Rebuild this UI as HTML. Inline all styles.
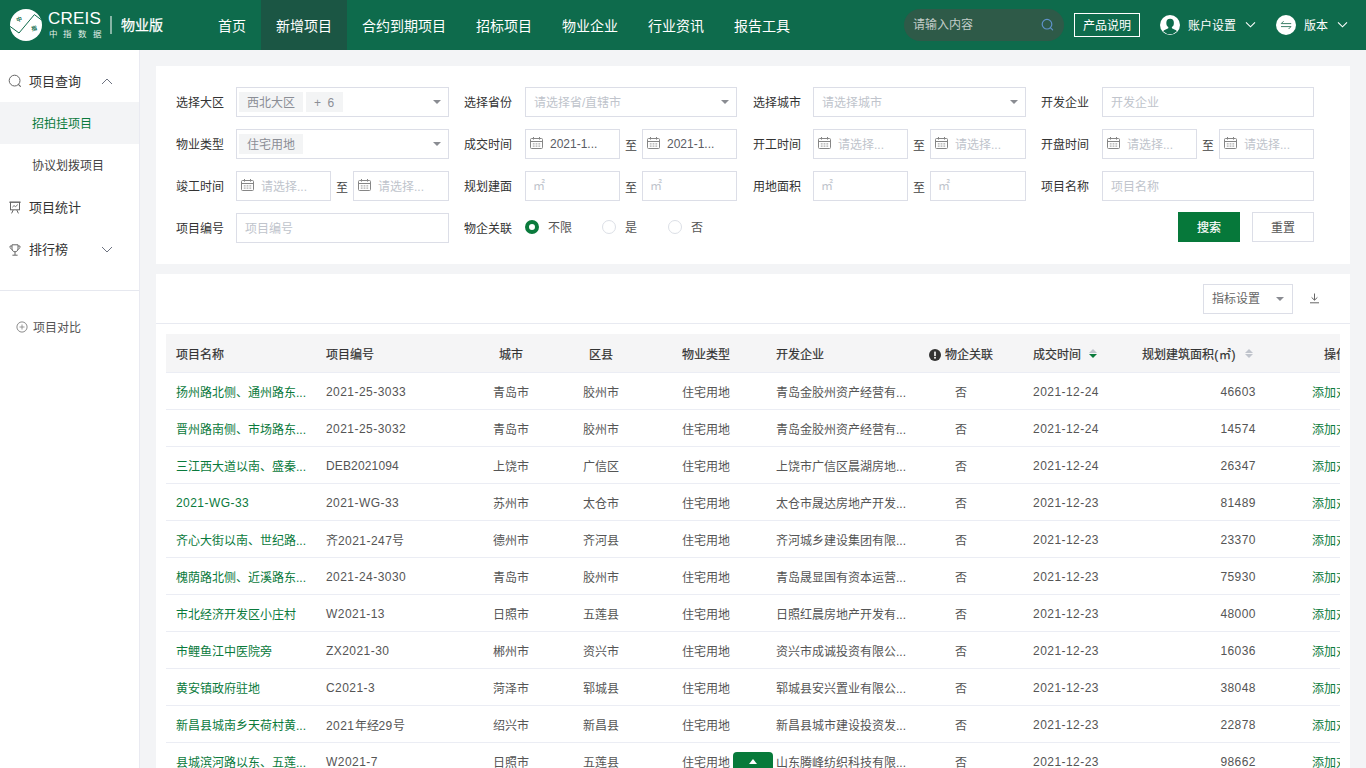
<!DOCTYPE html>
<html lang="zh-CN">
<head>
<meta charset="utf-8">
<title>CREIS 中指数据 物业版</title>
<style>
*{box-sizing:border-box;margin:0;padding:0}
html,body{width:1366px;height:768px;overflow:hidden}
body{position:relative;background:#f3f4f6;font-family:"Liberation Sans",sans-serif;font-size:12px;color:#333;-webkit-font-smoothing:antialiased}
.abs{position:absolute}
/* header */
#hdr{position:absolute;left:0;top:0;width:1366px;height:50px;background:#0e6b4c;color:#fff}
#hdr .logo-c{position:absolute;left:10px;top:9px;width:32px;height:32px}
#hdr .brand{position:absolute;left:48px;top:9px;font-size:17px;line-height:20px;letter-spacing:.2px;color:#fff}
#hdr .brand2{position:absolute;left:48.5px;top:28.5px;font-size:8.5px;line-height:11px;letter-spacing:5.9px;color:#e3efe9;white-space:nowrap}
#hdr .vbar{position:absolute;left:110px;top:16px;width:2px;height:18px;background:#86b5a5}
#hdr .edition{position:absolute;left:121px;top:15px;font-size:14px;line-height:20px;color:#fff;font-weight:500;-webkit-text-stroke:.25px #fff}
#nav{position:absolute;left:203px;top:0;height:50px;display:flex}
#nav div{height:50px;line-height:53px;padding:0 15px;font-size:14px;color:#fff;white-space:nowrap;width:auto}
#nav div.on{background:#1b5644}
#srch{position:absolute;left:904px;top:9px;width:160px;height:32px;border-radius:16px;background:#2e5a48}
#srch span{position:absolute;left:9px;top:0;line-height:32px;font-size:12px;color:#c3cdc8}
#srch svg{position:absolute;left:137px;top:9px}
#pbtn{position:absolute;left:1074px;top:13px;width:66px;height:24px;border:1px solid #fff;line-height:25px;text-align:center;font-size:12px;color:#fff}
.hcirc{position:absolute;top:15px;width:20px;height:20px;border-radius:50%;background:#fff;overflow:hidden}
.htxt{position:absolute;top:15px;line-height:23px;font-size:12px;color:#fff;white-space:nowrap}
.hchev{position:absolute;top:21px}
/* sidebar */
#side{position:absolute;left:0;top:50px;width:140px;height:718px;background:#fff;border-right:1px solid #e9eaf1}
#side .it{position:absolute;left:0;width:139px;height:42px;line-height:44px;font-size:13px;color:#333}
#side .it span{position:absolute;left:29px;top:0;white-space:nowrap}
#side .it svg{position:absolute}
#side .sub{position:absolute;left:0;width:139px;height:42px;line-height:45px;font-size:12px;color:#444;padding-left:32px}
#side .sub.on{background:#f3f4f6;color:#0a7a3c}
#side .hr{position:absolute;left:0;top:240px;width:139px;height:1px;background:#e6e8ef}
#side .cmp{position:absolute;left:33px;top:267px;line-height:23px;font-size:12px;color:#555}
/* cards */
.card{position:absolute;left:156px;width:1194px;background:#fff}
.lbl{position:absolute;height:30px;line-height:33px;font-size:12px;color:#333;white-space:nowrap}
.inp{position:absolute;height:30px;border:1px solid #dcdee7;background:#fff;line-height:30px;font-size:12px;color:#c0c4cc;padding-left:8px;white-space:nowrap;overflow:hidden}
.inp.sel:after{content:"";position:absolute;right:7px;top:12px;border:4px solid transparent;border-top:4px solid #8a8c92;border-bottom:none}
.inp .tag{display:inline-block;height:20px;line-height:23px;overflow:hidden;padding:0 8px;background:#f3f4f5;color:#8b8e96;margin:4px 3px 0 0;vertical-align:top}
.inp.dt{padding-left:24px}
.inp.dt svg{position:absolute;left:4px;top:7px}
.inp.val{color:#5a5c63;line-height:28px}
.zhi{position:absolute;width:22px;height:30px;line-height:34px;text-align:center;font-size:12px;color:#444}
.radio{position:absolute;top:154px;width:14px;height:14px;border-radius:50%;border:1px solid #dcdfe6;background:#fff}
.radio.on{border:4px solid #0a7a3c}
.rl{position:absolute;top:147px;line-height:31px;font-size:12px;color:#555}
.btn{position:absolute;top:146px;width:62px;height:30px;line-height:33px;text-align:center;font-size:12px}

/* table card */
#c2 .tool{position:absolute;left:1047px;top:10px;width:90px;height:30px;border:1px solid #dcdee7;line-height:29px;font-size:12px;color:#666;padding-left:8px}
#c2 .tool:after{content:"";position:absolute;right:8px;top:12px;border:4px solid transparent;border-top:4px solid #8a8c92;border-bottom:none}
#c2 .dl{position:absolute;left:1153px;top:19px}
#c2 .line{position:absolute;left:0;top:49px;width:1194px;height:1px;background:#e8eaf1}
#tw{position:absolute;left:10px;top:60px;width:1174px;height:440px;overflow:hidden}
#tb{position:absolute;left:0;top:0;width:1240px}
.tr{position:relative;width:1240px;height:37px;border-bottom:1px solid #ebedf4;font-size:12px;color:#555;white-space:nowrap}
.tr.h{height:39px;background:#f5f5f6;color:#333;font-weight:500;-webkit-text-stroke:.2px #333}
.tr>div{position:absolute;top:0;height:36px;line-height:40px;padding:0 10px;overflow:hidden;white-space:nowrap}
.tr.h>div{height:38px;line-height:43px}
.c1{left:0;width:150px;color:#0a7a3c}.tr.h .c1{color:#333}
.c2{left:150px;width:150px}
.c3{left:300px;width:90px;text-align:center}
.c4{left:390px;width:90px;text-align:center}
.c5{left:480px;width:120px;text-align:center}
.c6{left:600px;width:150px}
.c7{left:750px;width:90px;text-align:center}
.c8{left:840px;width:120px;text-align:center}
.c9{left:960px;width:140px;text-align:right}
.c10{left:1100px;width:140px;text-align:center;color:#0a7a3c}.tr.h .c10{color:#333}
.ls{letter-spacing:.45px}
.tr>div.n{letter-spacing:.45px;line-height:39px}
.srt{display:inline-block;position:relative;width:8px;height:9px;margin-left:9px;vertical-align:1px}
.srt:before{content:"";position:absolute;left:0;top:0;border:4px solid transparent;border-bottom:4px solid #c0c4cc;border-top:none}
.srt:after{content:"";position:absolute;left:0;top:5px;border:4px solid transparent;border-top:4px solid #c0c4cc;border-bottom:none}
.srt.d:after{border-top-color:#0a7a3c}
#totop{position:absolute;left:733px;top:752px;width:40px;height:30px;background:#077a3a;border-radius:4px}
#totop:after{content:"";position:absolute;left:16px;top:6.5px;border:4.5px solid transparent;border-bottom:5px solid #fff;border-top:none}
</style>
</head>
<body>
<div id="hdr">
  <svg class="logo-c" viewBox="0 0 32 32"><circle cx="16" cy="16" r="16" fill="#fff"/><polyline points="0,17.4 9,24 24.4,5.6 31.5,11" fill="none" stroke="#0e6b4c" stroke-width="1"/><text x="6.3" y="13" font-size="5.5" font-weight="bold" fill="#0e6b4c" font-family="Liberation Sans, sans-serif" transform="rotate(-15 8 11)">中</text><text x="21" y="21.5" font-size="5.5" font-weight="bold" fill="#0e6b4c" font-family="Liberation Sans, sans-serif" transform="rotate(-15 23 19)">指</text></svg>
  <div class="brand">CREIS</div>
  <div class="brand2">中指数据</div>
  <div class="vbar"></div>
  <div class="edition">物业版</div>
  <div id="nav"><div>首页</div><div class="on">新增项目</div><div>合约到期项目</div><div>招标项目</div><div>物业企业</div><div>行业资讯</div><div>报告工具</div></div>
  <div id="srch"><span>请输入内容</span><svg width="14" height="14" viewBox="0 0 14 14"><circle cx="6" cy="6.2" r="4.8" fill="none" stroke="#5f92c9" stroke-width="1.2"/><path d="M9.6 9.8 L11.6 11.8" stroke="#5f92c9" stroke-width="1.2" stroke-linecap="round"/></svg></div>
  <div id="pbtn">产品说明</div>
  <div class="hcirc" style="left:1160px"><svg width="20" height="20" viewBox="0 0 20 20"><defs><clipPath id="avc"><circle cx="10" cy="10" r="9.2"/></clipPath></defs><g clip-path="url(#avc)" fill="#0e6b4c"><ellipse cx="10.1" cy="8" rx="3.8" ry="4.3"/><path d="M1.5 20 C2 15.2 5.8 14.6 8.3 13.2 L8.3 11 L11.9 11 L11.9 13.2 C14.4 14.6 18.2 15.2 18.7 20 Z"/></g></svg></div>
  <div class="htxt" style="left:1188px">账户设置</div>
  <svg class="hchev" style="left:1245px" width="11" height="8" viewBox="0 0 11 8"><path d="M1 1.3 L5.5 5.8 L10 1.3" fill="none" stroke="#fff" stroke-width="1.1"/></svg>
  <div class="hcirc" style="left:1276px"><svg width="20" height="20" viewBox="0 0 20 20"><path d="M15.2 8.6 H5.2 L7.6 6.2" fill="none" stroke="#3f8069" stroke-width="1"/><path d="M5 11.6 H15 L12.6 14" fill="none" stroke="#3f8069" stroke-width="1"/></svg></div>
  <div class="htxt" style="left:1304px">版本</div>
  <svg class="hchev" style="left:1337px" width="11" height="8" viewBox="0 0 11 8"><path d="M1 1.3 L5.5 5.8 L10 1.3" fill="none" stroke="#fff" stroke-width="1.1"/></svg>
</div>

<div id="side">
  <div class="it" style="top:10px"><svg style="left:8px;top:14px" width="14" height="14" viewBox="0 0 14 14"><circle cx="6.6" cy="6.6" r="5.4" fill="none" stroke="#666" stroke-width="1"/><path d="M10.6 10.6 L12.4 12.4" stroke="#666" stroke-width="1.1" stroke-linecap="round"/></svg><span>项目查询</span><svg style="left:101px;top:18px" width="12" height="7" viewBox="0 0 12 7"><path d="M1 6 L6 1 L11 6" fill="none" stroke="#6d7280" stroke-width="1"/></svg></div>
  <div class="sub on" style="top:52px">招拍挂项目</div>
  <div class="sub" style="top:94px">协议划拨项目</div>
  <div class="it" style="top:136px"><svg style="left:9px;top:15px" width="12" height="13" viewBox="0 0 12 13"><path d="M0.2 1.2 H11.8" stroke="#666" stroke-width="1"/><rect x="1.5" y="1.2" width="9" height="7.6" fill="none" stroke="#666" stroke-width="1"/><path d="M3.4 6.2 L5 4.6 L6.6 5.6 L8.8 3.6" fill="none" stroke="#666" stroke-width="0.9"/><path d="M4.2 9 L2.6 12.4 M7.8 9 L9.4 12.4" stroke="#666" stroke-width="1"/></svg><span>项目统计</span></div>
  <div class="it" style="top:178px"><svg style="left:9px;top:16px" width="12" height="13" viewBox="0 0 12 13"><path d="M3 0.8 H9 V4.4 C9 6.6 7.8 7.8 6 7.8 C4.2 7.8 3 6.6 3 4.4 Z" fill="none" stroke="#666" stroke-width="1"/><path d="M3 2 H1 C0.8 4.2 1.8 5.2 3.3 5.4 M9 2 H11 C11.2 4.2 10.2 5.2 8.7 5.4" fill="none" stroke="#666" stroke-width="0.9"/><path d="M6 7.8 V11 M3.4 11.2 H8.6" stroke="#666" stroke-width="1"/></svg><span>排行榜</span><svg style="left:101px;top:18px" width="12" height="7" viewBox="0 0 12 7"><path d="M1 1 L6 6 L11 1" fill="none" stroke="#6d7280" stroke-width="1"/></svg></div>
  <div class="hr"></div>
  <svg class="abs" style="left:16px;top:271px" width="12" height="12" viewBox="0 0 12 12"><circle cx="6" cy="6" r="5.1" fill="none" stroke="#777" stroke-width="0.85"/><path d="M6 3.5 V8.5 M3.5 6 H8.5" stroke="#808080" stroke-width="0.8"/></svg>
  <div class="cmp">项目对比</div>
</div>

<!-- filter card -->
<div class="card" id="c1" style="top:66px;height:198px">
  <!-- row1 -->
  <div class="lbl" style="left:20px;top:21px">选择大区</div>
  <div class="inp sel" style="left:80px;top:21px;width:213px;padding-left:2px"><span class="tag">西北大区</span><span class="tag" style="word-spacing:2px;letter-spacing:.6px">+ 6</span></div>
  <div class="lbl" style="left:308px;top:21px">选择省份</div>
  <div class="inp sel" style="left:369px;top:21px;width:212px">请选择省/直辖市</div>
  <div class="lbl" style="left:597px;top:21px">选择城市</div>
  <div class="inp sel" style="left:657px;top:21px;width:213px">请选择城市</div>
  <div class="lbl" style="left:885px;top:21px">开发企业</div>
  <div class="inp" style="left:946px;top:21px;width:212px">开发企业</div>
  <!-- row2 -->
  <div class="lbl" style="left:20px;top:63px">物业类型</div>
  <div class="inp sel" style="left:80px;top:63px;width:213px;padding-left:2px"><span class="tag">住宅用地</span></div>
  <div class="lbl" style="left:308px;top:63px">成交时间</div>
  <div class="inp dt val" style="left:369px;top:63px;width:95px"><svg width="13" height="12" viewBox="0 0 13 12"><rect x="0.5" y="1.5" width="12" height="10" rx="1" fill="none" stroke="#868686" stroke-width="1"/><path d="M0.5 4.5 H12.5" stroke="#868686" stroke-width="1"/><path d="M3.5 0 V2.6 M9.5 0 V2.6" stroke="#868686" stroke-width="1"/><path d="M2.8 6.9 H4.6 M5.6 6.9 H7.4 M8.4 6.9 H10.2 M2.8 9.1 H4.6 M5.6 9.1 H7.4 M8.4 9.1 H10.2" stroke="#8d8d8d" stroke-width="0.9"/></svg>2021-1...</div>
  <div class="zhi" style="left:464px;top:63px">至</div>
  <div class="inp dt val" style="left:486px;top:63px;width:95px"><svg width="13" height="12" viewBox="0 0 13 12"><rect x="0.5" y="1.5" width="12" height="10" rx="1" fill="none" stroke="#868686" stroke-width="1"/><path d="M0.5 4.5 H12.5" stroke="#868686" stroke-width="1"/><path d="M3.5 0 V2.6 M9.5 0 V2.6" stroke="#868686" stroke-width="1"/><path d="M2.8 6.9 H4.6 M5.6 6.9 H7.4 M8.4 6.9 H10.2 M2.8 9.1 H4.6 M5.6 9.1 H7.4 M8.4 9.1 H10.2" stroke="#8d8d8d" stroke-width="0.9"/></svg>2021-1...</div>
  <div class="lbl" style="left:597px;top:63px">开工时间</div>
  <div class="inp dt" style="left:657px;top:63px;width:95px"><svg width="13" height="12" viewBox="0 0 13 12"><rect x="0.5" y="1.5" width="12" height="10" rx="1" fill="none" stroke="#868686" stroke-width="1"/><path d="M0.5 4.5 H12.5" stroke="#868686" stroke-width="1"/><path d="M3.5 0 V2.6 M9.5 0 V2.6" stroke="#868686" stroke-width="1"/><path d="M2.8 6.9 H4.6 M5.6 6.9 H7.4 M8.4 6.9 H10.2 M2.8 9.1 H4.6 M5.6 9.1 H7.4 M8.4 9.1 H10.2" stroke="#8d8d8d" stroke-width="0.9"/></svg>请选择...</div>
  <div class="zhi" style="left:752px;top:63px">至</div>
  <div class="inp dt" style="left:774px;top:63px;width:96px"><svg width="13" height="12" viewBox="0 0 13 12"><rect x="0.5" y="1.5" width="12" height="10" rx="1" fill="none" stroke="#868686" stroke-width="1"/><path d="M0.5 4.5 H12.5" stroke="#868686" stroke-width="1"/><path d="M3.5 0 V2.6 M9.5 0 V2.6" stroke="#868686" stroke-width="1"/><path d="M2.8 6.9 H4.6 M5.6 6.9 H7.4 M8.4 6.9 H10.2 M2.8 9.1 H4.6 M5.6 9.1 H7.4 M8.4 9.1 H10.2" stroke="#8d8d8d" stroke-width="0.9"/></svg>请选择...</div>
  <div class="lbl" style="left:885px;top:63px">开盘时间</div>
  <div class="inp dt" style="left:946px;top:63px;width:95px"><svg width="13" height="12" viewBox="0 0 13 12"><rect x="0.5" y="1.5" width="12" height="10" rx="1" fill="none" stroke="#868686" stroke-width="1"/><path d="M0.5 4.5 H12.5" stroke="#868686" stroke-width="1"/><path d="M3.5 0 V2.6 M9.5 0 V2.6" stroke="#868686" stroke-width="1"/><path d="M2.8 6.9 H4.6 M5.6 6.9 H7.4 M8.4 6.9 H10.2 M2.8 9.1 H4.6 M5.6 9.1 H7.4 M8.4 9.1 H10.2" stroke="#8d8d8d" stroke-width="0.9"/></svg>请选择...</div>
  <div class="zhi" style="left:1041px;top:63px">至</div>
  <div class="inp dt" style="left:1063px;top:63px;width:95px"><svg width="13" height="12" viewBox="0 0 13 12"><rect x="0.5" y="1.5" width="12" height="10" rx="1" fill="none" stroke="#868686" stroke-width="1"/><path d="M0.5 4.5 H12.5" stroke="#868686" stroke-width="1"/><path d="M3.5 0 V2.6 M9.5 0 V2.6" stroke="#868686" stroke-width="1"/><path d="M2.8 6.9 H4.6 M5.6 6.9 H7.4 M8.4 6.9 H10.2 M2.8 9.1 H4.6 M5.6 9.1 H7.4 M8.4 9.1 H10.2" stroke="#8d8d8d" stroke-width="0.9"/></svg>请选择...</div>
  <!-- row3 -->
  <div class="lbl" style="left:20px;top:105px">竣工时间</div>
  <div class="inp dt" style="left:80px;top:105px;width:95px"><svg width="13" height="12" viewBox="0 0 13 12"><rect x="0.5" y="1.5" width="12" height="10" rx="1" fill="none" stroke="#868686" stroke-width="1"/><path d="M0.5 4.5 H12.5" stroke="#868686" stroke-width="1"/><path d="M3.5 0 V2.6 M9.5 0 V2.6" stroke="#868686" stroke-width="1"/><path d="M2.8 6.9 H4.6 M5.6 6.9 H7.4 M8.4 6.9 H10.2 M2.8 9.1 H4.6 M5.6 9.1 H7.4 M8.4 9.1 H10.2" stroke="#8d8d8d" stroke-width="0.9"/></svg>请选择...</div>
  <div class="zhi" style="left:175px;top:105px">至</div>
  <div class="inp dt" style="left:197px;top:105px;width:96px"><svg width="13" height="12" viewBox="0 0 13 12"><rect x="0.5" y="1.5" width="12" height="10" rx="1" fill="none" stroke="#868686" stroke-width="1"/><path d="M0.5 4.5 H12.5" stroke="#868686" stroke-width="1"/><path d="M3.5 0 V2.6 M9.5 0 V2.6" stroke="#868686" stroke-width="1"/><path d="M2.8 6.9 H4.6 M5.6 6.9 H7.4 M8.4 6.9 H10.2 M2.8 9.1 H4.6 M5.6 9.1 H7.4 M8.4 9.1 H10.2" stroke="#8d8d8d" stroke-width="0.9"/></svg>请选择...</div>
  <div class="lbl" style="left:308px;top:105px">规划建面</div>
  <div class="inp" style="left:369px;top:105px;width:95px;padding-left:7px;line-height:28px">㎡</div>
  <div class="zhi" style="left:464px;top:105px">至</div>
  <div class="inp" style="left:486px;top:105px;width:95px;padding-left:7px;line-height:28px">㎡</div>
  <div class="lbl" style="left:597px;top:105px">用地面积</div>
  <div class="inp" style="left:657px;top:105px;width:95px;padding-left:7px;line-height:28px">㎡</div>
  <div class="zhi" style="left:752px;top:105px">至</div>
  <div class="inp" style="left:774px;top:105px;width:96px;padding-left:7px;line-height:28px">㎡</div>
  <div class="lbl" style="left:885px;top:105px">项目名称</div>
  <div class="inp" style="left:946px;top:105px;width:212px">项目名称</div>
  <!-- row4 -->
  <div class="lbl" style="left:20px;top:147px">项目编号</div>
  <div class="inp" style="left:80px;top:147px;width:213px">项目编号</div>
  <div class="lbl" style="left:308px;top:147px">物企关联</div>
  <div class="radio on" style="left:369px"></div><div class="rl" style="left:392px">不限</div>
  <div class="radio" style="left:446px"></div><div class="rl" style="left:469px">是</div>
  <div class="radio" style="left:512px"></div><div class="rl" style="left:535px">否</div>
  <div class="btn" style="left:1022px;background:#06783a;color:#fff;font-weight:500;-webkit-text-stroke:.2px #fff">搜索</div>
  <div class="btn" style="left:1096px;border:1px solid #dcdee7;color:#555;line-height:31px">重置</div>
</div>

<!-- table card -->
<div class="card" id="c2" style="top:274px;height:494px">
  <div class="tool">指标设置</div>
  <svg class="dl" width="11" height="11" viewBox="0 0 11 11"><path d="M5.5 0.5 V7 M2.6 4.4 L5.5 7.2 L8.4 4.4" fill="none" stroke="#666" stroke-width="1"/><path d="M1 9.8 H10" stroke="#666" stroke-width="1"/></svg>
  <div class="line"></div>
  <div id="tw"><div id="tb">
    <div class="tr h"><div class="c1">项目名称</div><div class="c2">项目编号</div><div class="c3">城市</div><div class="c4">区县</div><div class="c5">物业类型</div><div class="c6">开发企业</div><div class="c7"><svg width="12" height="12" viewBox="0 0 12 12" style="vertical-align:-2px;margin-right:4px"><circle cx="6" cy="6" r="6" fill="#333"/><rect x="5.2" y="2.4" width="1.6" height="4.6" rx=".5" fill="#fff"/><circle cx="6" cy="8.8" r=".95" fill="#fff"/></svg>物企关联</div><div class="c8">成交时间<i class="srt d" style="margin-left:8px;margin-right:2px"></i></div><div class="c9">规划建筑面积<span style="letter-spacing:.6px">(㎡)</span><i class="srt" style="margin-right:3px"></i></div><div class="c10">操作</div></div>
    <div class="tr"><div class="c1">扬州路北侧、通州路东...</div><div class="c2 n">2021-25-3033</div><div class="c3">青岛市</div><div class="c4">胶州市</div><div class="c5">住宅用地</div><div class="c6">青岛金胶州资产经营有...</div><div class="c7">否</div><div class="c8 n">2021-12-24</div><div class="c9 n">46603</div><div class="c10">添加对比</div></div>
    <div class="tr"><div class="c1">晋州路南侧、市场路东...</div><div class="c2 n">2021-25-3032</div><div class="c3">青岛市</div><div class="c4">胶州市</div><div class="c5">住宅用地</div><div class="c6">青岛金胶州资产经营有...</div><div class="c7">否</div><div class="c8 n">2021-12-24</div><div class="c9 n">14574</div><div class="c10">添加对比</div></div>
    <div class="tr"><div class="c1">三江西大道以南、盛秦...</div><div class="c2 n" style="letter-spacing:.15px">DEB2021094</div><div class="c3">上饶市</div><div class="c4">广信区</div><div class="c5">住宅用地</div><div class="c6">上饶市广信区晨湖房地...</div><div class="c7">否</div><div class="c8 n">2021-12-24</div><div class="c9 n">26347</div><div class="c10">添加对比</div></div>
    <div class="tr"><div class="c1 n">2021-WG-33</div><div class="c2 n">2021-WG-33</div><div class="c3">苏州市</div><div class="c4">太仓市</div><div class="c5">住宅用地</div><div class="c6">太仓市晟达房地产开发...</div><div class="c7">否</div><div class="c8 n">2021-12-23</div><div class="c9 n">81489</div><div class="c10">添加对比</div></div>
    <div class="tr"><div class="c1">齐心大街以南、世纪路...</div><div class="c2">齐<span class="ls">2021-247</span>号</div><div class="c3">德州市</div><div class="c4">齐河县</div><div class="c5">住宅用地</div><div class="c6">齐河城乡建设集团有限...</div><div class="c7">否</div><div class="c8 n">2021-12-23</div><div class="c9 n">23370</div><div class="c10">添加对比</div></div>
    <div class="tr"><div class="c1">槐荫路北侧、近溪路东...</div><div class="c2 n">2021-24-3030</div><div class="c3">青岛市</div><div class="c4">胶州市</div><div class="c5">住宅用地</div><div class="c6">青岛晟显国有资本运营...</div><div class="c7">否</div><div class="c8 n">2021-12-23</div><div class="c9 n">75930</div><div class="c10">添加对比</div></div>
    <div class="tr"><div class="c1">市北经济开发区小庄村</div><div class="c2 n">W2021-13</div><div class="c3">日照市</div><div class="c4">五莲县</div><div class="c5">住宅用地</div><div class="c6">日照红晨房地产开发有...</div><div class="c7">否</div><div class="c8 n">2021-12-23</div><div class="c9 n">48000</div><div class="c10">添加对比</div></div>
    <div class="tr"><div class="c1">市鲤鱼江中医院旁</div><div class="c2 n">ZX2021-30</div><div class="c3">郴州市</div><div class="c4">资兴市</div><div class="c5">住宅用地</div><div class="c6">资兴市成诚投资有限公...</div><div class="c7">否</div><div class="c8 n">2021-12-23</div><div class="c9 n">16036</div><div class="c10">添加对比</div></div>
    <div class="tr"><div class="c1">黄安镇政府驻地</div><div class="c2 n">C2021-3</div><div class="c3">菏泽市</div><div class="c4">郓城县</div><div class="c5">住宅用地</div><div class="c6">郓城县安兴置业有限公...</div><div class="c7">否</div><div class="c8 n">2021-12-23</div><div class="c9 n">38048</div><div class="c10">添加对比</div></div>
    <div class="tr"><div class="c1">新昌县城南乡天荷村黄...</div><div class="c2"><span class="ls">2021</span>年经<span class="ls">29</span>号</div><div class="c3">绍兴市</div><div class="c4">新昌县</div><div class="c5">住宅用地</div><div class="c6">新昌县城市建设投资发...</div><div class="c7">否</div><div class="c8 n">2021-12-23</div><div class="c9 n">22878</div><div class="c10">添加对比</div></div>
    <div class="tr"><div class="c1">县城滨河路以东、五莲...</div><div class="c2 n">W2021-7</div><div class="c3">日照市</div><div class="c4">五莲县</div><div class="c5">住宅用地</div><div class="c6">山东腾峰纺织科技有限...</div><div class="c7">否</div><div class="c8 n">2021-12-23</div><div class="c9 n">98662</div><div class="c10">添加对比</div></div>
  </div></div>
</div>
<div id="totop"></div>
</body>
</html>
